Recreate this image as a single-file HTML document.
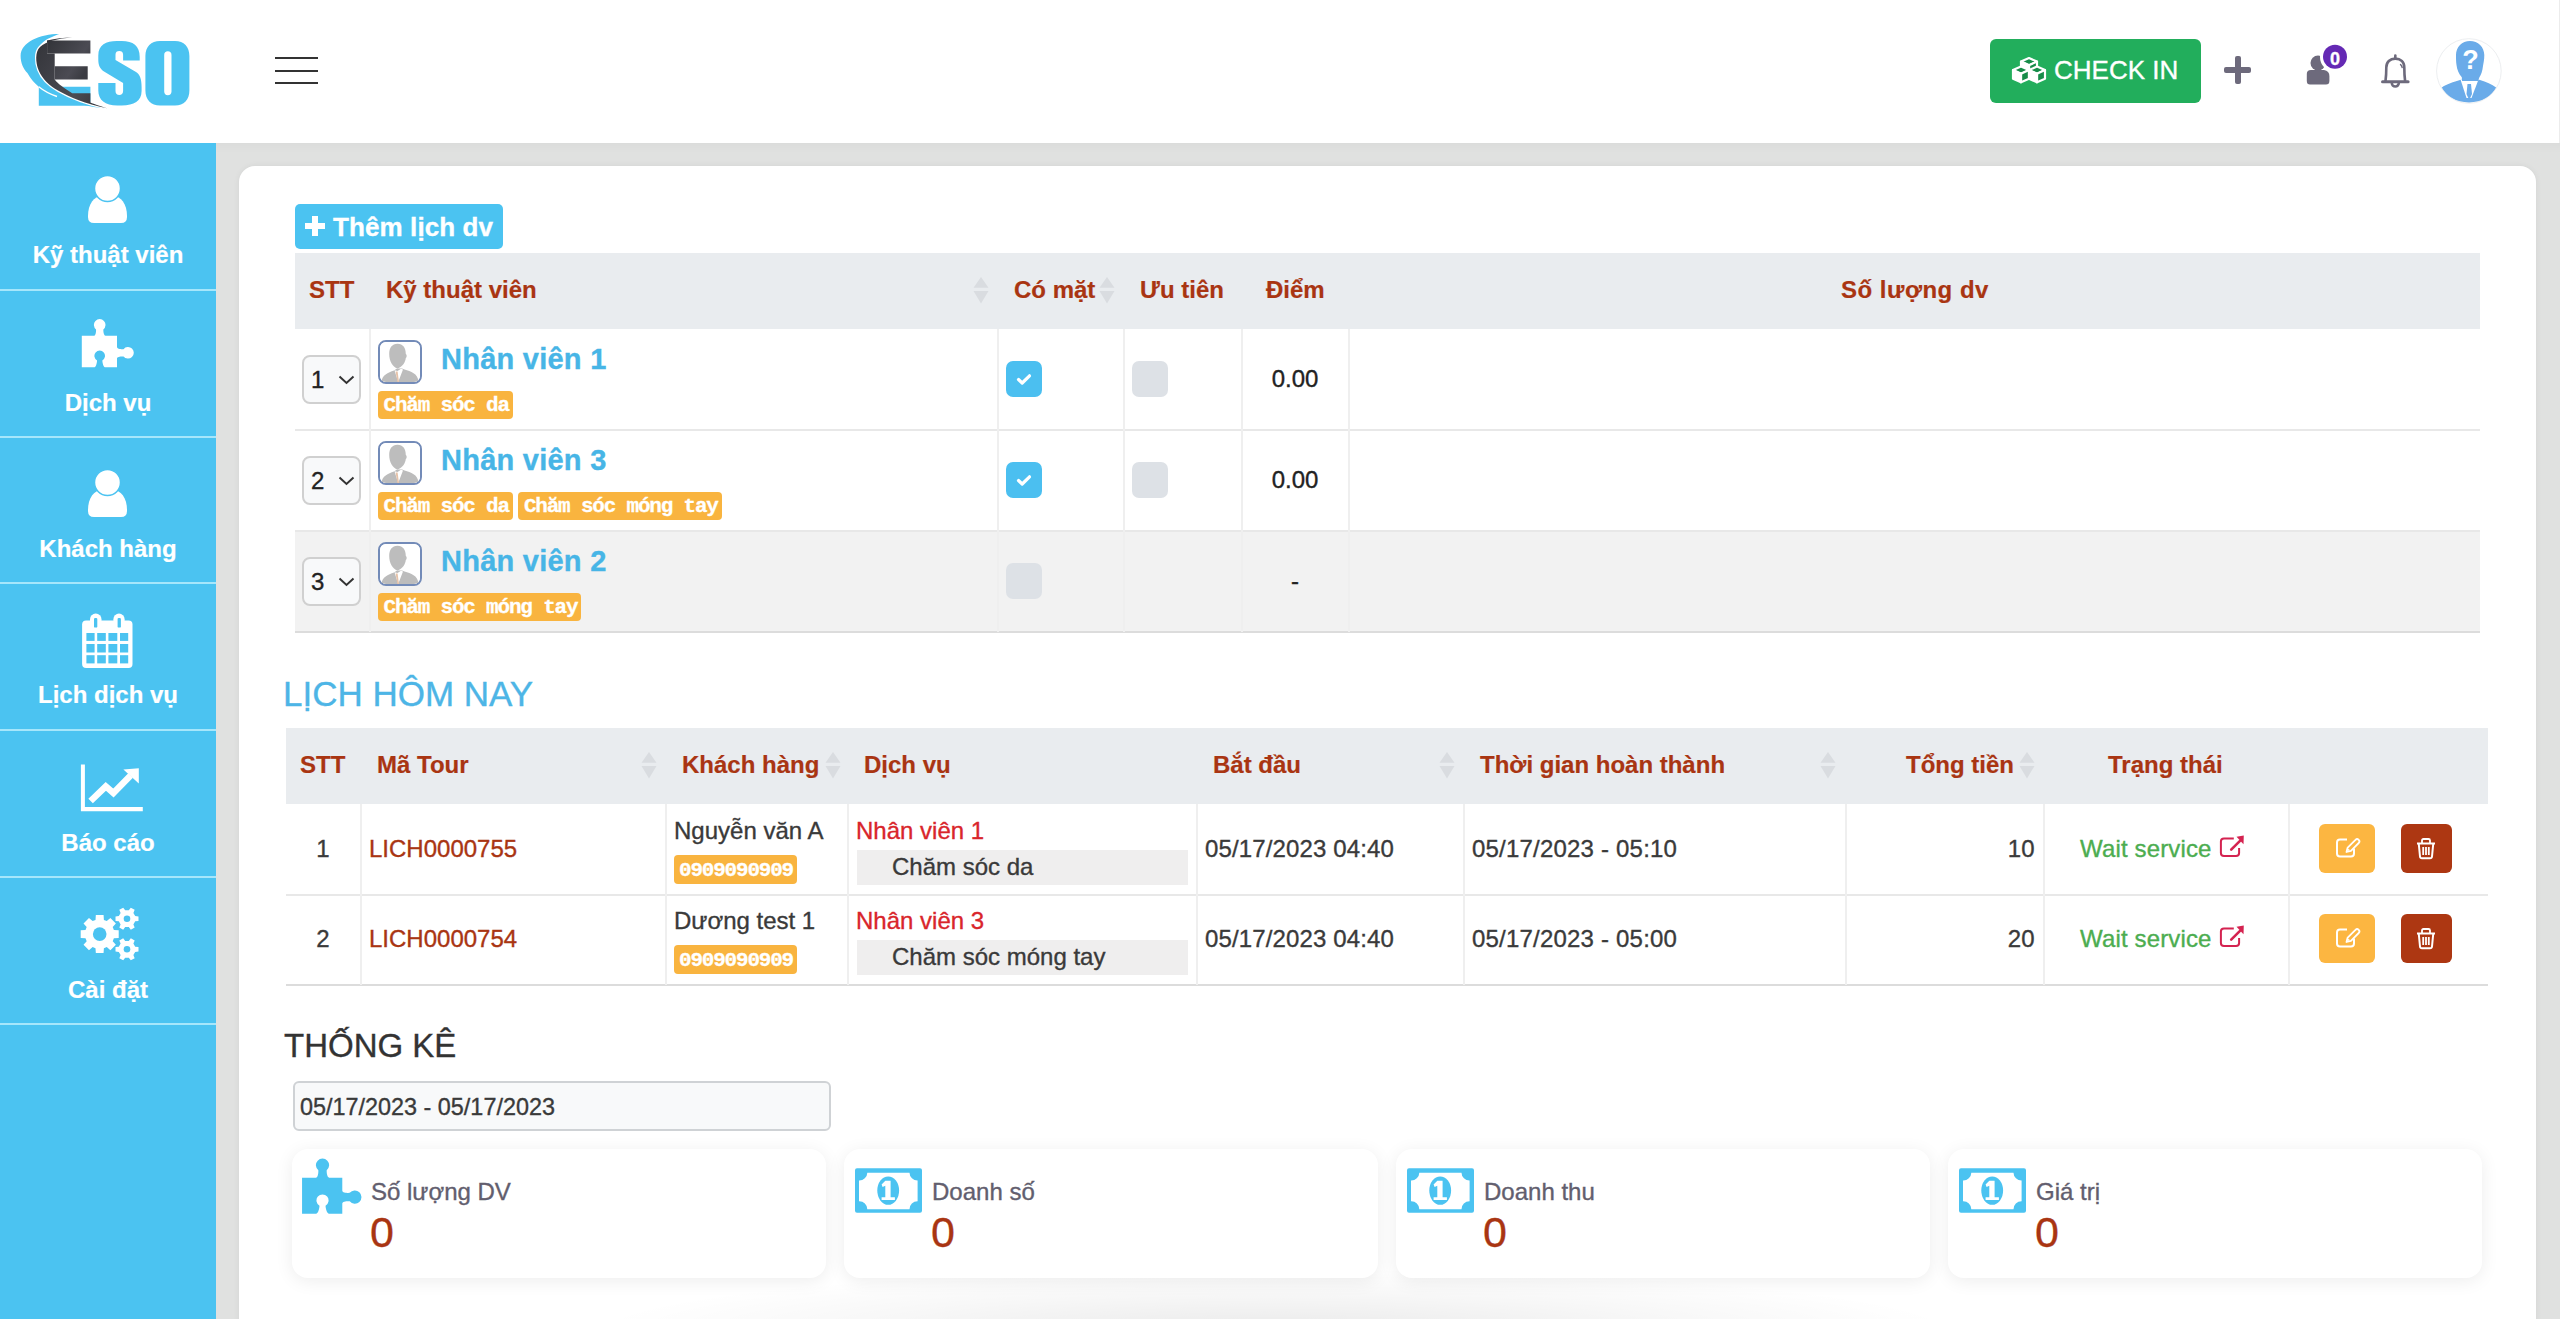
<!DOCTYPE html>
<html><head><meta charset="utf-8"><style>
*{box-sizing:border-box;margin:0;padding:0}
html,body{width:2560px;height:1319px;overflow:hidden}
body{position:relative;background:#e0e1e0;font-family:"Liberation Sans",sans-serif;color:#333}
.a{position:absolute}
.t{position:absolute;white-space:nowrap;line-height:1;-webkit-text-stroke-width:0.35px}
.b{font-weight:700}
.sl{position:absolute;left:0;width:216px;height:2px;background:#a6e6fb}
.st{position:absolute;left:0;width:216px;text-align:center;color:#fff;font-weight:700;font-size:24px;line-height:1;white-space:nowrap;-webkit-text-stroke-width:0.2px}
.th{position:absolute;white-space:nowrap;line-height:1;-webkit-text-stroke-width:0.2px;color:#a93512;font-weight:700;font-size:24px}
.hbg{background:#e9ecef}
.vl{position:absolute;width:2px;background:#efefef}
.hl{position:absolute;height:2px;background:#e8e8e8}
.tag{position:absolute;height:28px;background:#f9b43f;border-radius:4px;color:#fff;font-family:"Liberation Mono",monospace;font-weight:700;font-size:21px;letter-spacing:-1.2px;-webkit-text-stroke-width:0.3px;line-height:30px;padding:0 4px 0 5.5px;white-space:nowrap}
.sel{position:absolute;width:59px;height:49px;border:2px solid #d0d0d0;border-radius:8px;background:#f8f9fa}
.ava{position:absolute;width:44px;height:44px;border:2px solid #738bb8;border-radius:8px;background:#fff;overflow:hidden}
.chk{position:absolute;width:36px;height:36px;border-radius:7px;background:#dde1e6}
.chk.on{background:#4bbff0}
.stat{position:absolute;top:1149px;height:129px;background:#fff;border-radius:16px;box-shadow:0 3px 18px rgba(0,0,0,0.075)}
</style></head><body>
<div class="a" style="left:0;top:0;width:2560px;height:143px;background:#fff"></div>
<div class="a" style="left:2559px;top:0;width:1px;height:143px;background:#ececec"></div>
<svg class="a" style="left:0;top:0" width="200" height="120" viewBox="0 0 200 120">
<defs><linearGradient id="eg" x1="0" y1="0" x2="1" y2="0.6"><stop offset="0" stop-color="#333439"/><stop offset="0.75" stop-color="#4b4b53"/><stop offset="1" stop-color="#3b3c42"/></linearGradient></defs>
<path d="M38.8,86.7 H90.4 V105.7 H38.8 Z" fill="#4bc3f1"/>
<path d="M59.3,34 C40,34 20.6,42 20.6,56 C20.6,63 23.5,69 27.4,73 C31,79 34,83 38.8,86.7 C44,91 50,94 57,96.5 C72,102.5 90,107 106.3,108.6 C90,104.5 76,100 66,95 C54,89 45,81 40.5,73 C36.5,66 35.5,58 37,52 C39,44 46,39 52,37 C55,35.5 57,34.5 59.3,34 Z" fill="#4bc3f1"/>
<path d="M38.8,86.7 C44,91 50,94 57,96.5" stroke="#fff" stroke-width="1.4" fill="none"/>
<path d="M72.2,37.4 C58,38.5 46,41 40,47 C35,52 35.5,62 38.5,70 C42,79 50,86 58,90.5 C70,97.5 85,103.5 107,108.3" stroke="#fff" stroke-width="2.6" fill="none"/>
<path d="M72.2,37.4 C58,38.5 46,41 40,47 C35,52 35.5,62 38.5,70 C42,79 50,86 58,90.5 C70,97.5 85,103.5 107,108.3 C98,105.5 93,103.5 90.4,102.5 V93.2 H72.2 C64,88 58,84 54.7,79.5 V53.4 H47.1 V40.5 C55,38.5 64,37.4 72.2,37.4 Z" fill="url(#eg)"/>
<path d="M47.1,40.5 H90.4 V53.4 H47.1 Z M54.7,66.2 H87.7 V79.5 H54.7 Z" fill="url(#eg)"/>
<path d="M98.3,55.5 C98.3,45 106,41.1 116.8,41.1 H121.8 C133,41.1 139.7,46 139.7,56.8 V60.6 H123.1 V54.8 C123.1,52 121.5,51 119.3,51 C117,51 115.5,52 115.5,54.8 V59.9 L136,72 C140,74.5 141.6,79 141.6,87.3 V91.1 C141.6,101 134,105.5 121.8,105.5 H117.4 C105,105.5 98.3,100 98.3,90.5 V82.9 H115.5 V91.1 C115.5,94 117,95 119.3,95 C121.5,95 123.1,94 123.1,91.1 V82.9 L104,71.5 C100,69 98.3,65 98.3,60 Z" fill="#4bc3f1"/>
<path d="M160,41.1 H175 C184,41.1 189.4,47 189.4,56 V90.5 C189.4,99.5 184,105.5 175,105.5 H160 C151,105.5 145.4,99.5 145.4,90.5 V56 C145.4,47 151,41.1 160,41.1 Z M164.2,55 V91.6 C164.2,94 165.6,95.3 167.85,95.3 C170.1,95.3 171.5,94 171.5,91.6 V55 C171.5,52.6 170.1,51.3 167.85,51.3 C165.6,51.3 164.2,52.6 164.2,55 Z" fill="#4bc3f1" fill-rule="evenodd"/>
</svg>
<div class="a" style="left:275px;top:57px;width:43px;height:2px;background:#333"></div>
<div class="a" style="left:275px;top:70px;width:43px;height:2px;background:#333"></div>
<div class="a" style="left:275px;top:82px;width:43px;height:2px;background:#333"></div>
<div class="a" style="left:1990px;top:39px;width:211px;height:64px;background:#22ae5c;border-radius:6px"></div>
<svg class="a" style="left:2000px;top:45px" width="60" height="50" viewBox="2000 45 60 50" stroke="#fff" stroke-width="2.2" stroke-linejoin="round"><path d="M2029,58 L2037,61.6 L2029,65.2 L2021,61.6 Z" fill="#178c49"/><path d="M2029,65.2 L2037,61.6 L2037,70.2 L2029,73.8 Z" fill="#178c49"/><path d="M2021,61.6 L2029,65.2 L2029,73.8 L2021,70.2 Z" fill="#fff"/><path d="M2021,66.5 L2029,70.1 L2021,73.7 L2013,70.1 Z" fill="#178c49"/><path d="M2021,73.7 L2029,70.1 L2029,78.69999999999999 L2021,82.3 Z" fill="#178c49"/><path d="M2013,70.1 L2021,73.7 L2021,82.3 L2013,78.69999999999999 Z" fill="#fff"/><path d="M2037,66.5 L2045,70.1 L2037,73.7 L2029,70.1 Z" fill="#178c49"/><path d="M2037,73.7 L2045,70.1 L2045,78.69999999999999 L2037,82.3 Z" fill="#178c49"/><path d="M2029,70.1 L2037,73.7 L2037,82.3 L2029,78.69999999999999 Z" fill="#fff"/></svg>
<div class="t" style="left:2054px;top:57px;font-size:26px;color:#fff">CHECK IN</div>
<div class="a" style="left:2224px;top:67px;width:27px;height:6px;background:#6d6a7c;border-radius:2px"></div>
<div class="a" style="left:2234.5px;top:56px;width:6px;height:28px;background:#6d6a7c;border-radius:2px"></div>
<svg class="a" style="left:2300px;top:40px" width="52" height="50" viewBox="2300 40 52 50"><defs><mask id="um"><rect x="2300" y="40" width="52" height="50" fill="#fff"/><circle cx="2335" cy="57" r="15" fill="#000"/></mask></defs><g mask="url(#um)" fill="#6d6a7c"><circle cx="2318" cy="63" r="7.5"/><path d="M2306.8,74 Q2306.8,70 2311,70 H2324 Q2329.4,71 2329.4,76 V81 Q2329.4,84.5 2326,84.5 H2310 Q2306.8,84.5 2306.8,81 Z"/></g><circle cx="2318" cy="63" r="0" /><circle cx="2335" cy="56.8" r="12" fill="#6429b4"/></svg>
<div class="t b" style="left:2323px;top:50px;width:24px;text-align:center;font-size:18px;color:#fff">0</div>
<svg class="a" style="left:2379px;top:53px" width="34" height="36" viewBox="0 0 34 36" fill="none" stroke="#6d6a7c" stroke-width="2.6" stroke-linecap="round"><path d="M16.3,2.5 V5.6"/><path d="M6.5,28 C7,24 7.3,20 7.3,14.5 C7.3,9 11,5.6 16.3,5.6 C21.6,5.6 25.3,9 25.3,14.5 C25.3,20 25.6,24 26.1,28"/><path d="M3.5,28.7 H29.1" stroke-width="3"/><path d="M12.8,30 A3.5,3.5 0 0 0 19.8,30"/><path d="M21.5,11.5 Q22.8,12.8 23.2,14.5" stroke-width="1.4"/></svg>
<svg class="a" style="left:2436px;top:38px" width="66" height="66" viewBox="0 0 66 66">
<defs><clipPath id="avc"><circle cx="32.9" cy="33" r="32.3"/></clipPath></defs>
<circle cx="32.9" cy="33" r="32.3" fill="#fff" stroke="#eceef0" stroke-width="1"/>
<g clip-path="url(#avc)">
<path d="M5.8,49.6 C10,46 18,44 24,42 L26,41.5 H42 L44,42 C50,44 56,46 60.1,49.6 C56,58 46,64.5 33,64.5 C20,64.5 10,58 5.8,49.6 Z" fill="#6aabe9"/>
<path d="M24.5,41.5 H42.5 L35.5,60 H30.5 Z" fill="#fff"/>
<path d="M31.5,46 H35 L36,56 L33.2,62 L30.5,56 Z" fill="#6aabe9"/>
<path d="M34,2.9 C42,2.9 48.3,9 48.3,17 C48.3,22 47.5,25 47,28 C46.5,33 45,37 43.4,39.3 L42,43 H26 L25.8,39.3 C23,36 21,32 20.5,27 C20,24 20,20 20,17 C20,9 26,2.9 34,2.9 Z" fill="#6aabe9"/>
</g>
<text x="34.4" y="30.5" text-anchor="middle" font-family="Liberation Sans" font-weight="700" font-size="27" fill="#fff">?</text>
</svg>
<div class="a" style="left:216px;top:143px;width:2344px;height:10px;background:linear-gradient(rgba(0,0,0,0.025),rgba(0,0,0,0))"></div>
<div class="a" style="left:0;top:143px;width:216px;height:1176px;background:#4bc3f1"></div>
<div class="sl" style="top:289px"></div>
<div class="sl" style="top:436px"></div>
<div class="sl" style="top:582px"></div>
<div class="sl" style="top:729px"></div>
<div class="sl" style="top:876px"></div>
<div class="sl" style="top:1023px"></div>
<div class="st" style="top:243px">Kỹ thuật viên</div>
<div class="st" style="top:391px">Dịch vụ</div>
<div class="st" style="top:537px">Khách hàng</div>
<div class="st" style="top:683px">Lịch dịch vụ</div>
<div class="st" style="top:831px">Báo cáo</div>
<div class="st" style="top:978px">Cài đặt</div>
<svg class="a" style="left:88px;top:176px" width="39" height="47" viewBox="0 0 39 47"><path d="M0,40 C0,28 6,20 14,20 H25 C33,20 39,28 39,40 V41 Q39,47 33,47 H6 Q0,47 0,41 Z" fill="#fff"/><circle cx="19.5" cy="12.5" r="13" fill="#fff" stroke="#4bc3f1" stroke-width="1.5"/></svg>
<svg class="a" style="left:88px;top:470px" width="39" height="47" viewBox="0 0 39 47"><path d="M0,40 C0,28 6,20 14,20 H25 C33,20 39,28 39,40 V41 Q39,47 33,47 H6 Q0,47 0,41 Z" fill="#fff"/><circle cx="19.5" cy="12.5" r="13" fill="#fff" stroke="#4bc3f1" stroke-width="1.5"/></svg>
<svg class="a" style="left:80px;top:316px" width="56" height="56" viewBox="0 0 56 56"><path d="M1.8,19.8 L14,19.8 C15.5,19.8 16.2,16 16.04,13.4 A5.8,5.8 0 1 1 23.36,13.4 C23.2,16 24,19.8 25.5,19.8 L37,19.8 L37,31 C37,33 41,33.3 43.5,33.14 A5.8,5.8 0 1 1 43.5,40.46 C41,40.3 37,40.6 37,42.6 L37,51.3 L25.5,51.3 C23.5,51.3 22.5,47 22.33,44.4 A5.3,5.3 0 1 0 17.07,44.4 C16.9,47 16,51.3 14,51.3 L1.8,51.3 Z" fill="#fff"/></svg>
<svg class="a" style="left:80px;top:612px" width="56" height="58" viewBox="0 0 56 58"><rect x="2.1" y="8.6" width="50.4" height="47.3" rx="4" fill="#fff"/><rect x="10" y="1.6" width="11.5" height="16" rx="5.7" fill="#fff"/><rect x="33.4" y="1.6" width="11.2" height="16" rx="5.6" fill="#fff"/><g fill="#4bc3f1"><rect x="14" y="5.9" width="3.3" height="9.7" rx="1.2"/><rect x="37.6" y="5.9" width="3.3" height="9.7" rx="1.2"/><rect x="6.4" y="21" width="8.2" height="7.9"/><rect x="6.4" y="32" width="8.2" height="8.5"/><rect x="6.4" y="43.2" width="8.2" height="8.2"/><rect x="17.2" y="21" width="8.6" height="7.9"/><rect x="17.2" y="32" width="8.6" height="8.5"/><rect x="17.2" y="43.2" width="8.6" height="8.2"/><rect x="28.4" y="21" width="8.9" height="7.9"/><rect x="28.4" y="32" width="8.9" height="8.5"/><rect x="28.4" y="43.2" width="8.9" height="8.2"/><rect x="40" y="21" width="8.2" height="7.9"/><rect x="40" y="32" width="8.2" height="8.5"/><rect x="40" y="43.2" width="8.2" height="8.2"/></g></svg>
<svg class="a" style="left:80px;top:763px" width="64" height="50" viewBox="0 0 64 50"><path d="M0.9,1.6 H4.9 V44 H62.8 V48.2 H0.9 Z" fill="#fff"/><path d="M10.6,38 L25.8,23.4 L33.4,30 L50.6,12.5" stroke="#fff" stroke-width="6.5" fill="none" stroke-linejoin="miter"/><path d="M43.4,6.4 L58.8,5.2 L58.8,20.4 Z" fill="#fff"/></svg>
<svg class="a" style="left:80px;top:900px" width="62" height="64" viewBox="0 0 62 64"><path d="M33.89,29.90 L38.71,30.23 L38.71,37.97 L33.89,38.30 L32.71,41.16 L35.88,44.81 L30.41,50.28 L26.76,47.11 L23.90,48.29 L23.57,53.11 L15.83,53.11 L15.50,48.29 L12.64,47.11 L8.99,50.28 L3.52,44.81 L6.69,41.16 L5.51,38.30 L0.69,37.97 L0.69,30.23 L5.51,29.90 L6.69,27.04 L3.52,23.39 L8.99,17.92 L12.64,21.09 L15.50,19.91 L15.83,15.09 L23.57,15.09 L23.90,19.91 L26.76,21.09 L30.41,17.92 L35.88,23.39 L32.71,27.04 Z M55.18,16.04 L58.49,16.47 L58.49,20.93 L55.18,21.36 L53.39,24.45 L54.68,27.53 L50.81,29.76 L48.79,27.11 L45.21,27.11 L43.19,29.76 L39.32,27.53 L40.61,24.45 L38.82,21.36 L35.51,20.93 L35.51,16.47 L38.82,16.04 L40.61,12.95 L39.32,9.87 L43.19,7.64 L45.21,10.29 L48.79,10.29 L50.81,7.64 L54.68,9.87 L53.39,12.95 Z M55.18,46.64 L58.49,47.07 L58.49,51.53 L55.18,51.96 L53.39,55.05 L54.68,58.13 L50.81,60.36 L48.79,57.71 L45.21,57.71 L43.19,60.36 L39.32,58.13 L40.61,55.05 L38.82,51.96 L35.51,51.53 L35.51,47.07 L38.82,46.64 L40.61,43.55 L39.32,40.47 L43.19,38.24 L45.21,40.89 L48.79,40.89 L50.81,38.24 L54.68,40.47 L53.39,43.55 Z" fill="#fff"/><circle cx="19.7" cy="34.1" r="6.8" fill="#4bc3f1"/><circle cx="47" cy="18.7" r="3.3" fill="#4bc3f1"/><circle cx="47" cy="49.3" r="3.3" fill="#4bc3f1"/></svg>
<div class="a" style="left:239px;top:166px;width:2297px;height:1300px;background:#fff;border-radius:16px;box-shadow:0 0 6px rgba(0,0,0,0.06)"></div>
<div class="a" style="left:590px;top:1268px;width:1370px;height:64px;background:radial-gradient(ellipse 50% 100% at 50% 100%, rgba(0,0,0,0.085), rgba(0,0,0,0.03) 60%, rgba(0,0,0,0) 100%)"></div>
<div class="a" style="left:295px;top:204px;width:208px;height:45px;background:#4bc3f1;border-radius:5px"></div>
<div class="a" style="left:305px;top:223px;width:20px;height:6px;background:#fff"></div>
<div class="a" style="left:312px;top:216px;width:6px;height:20px;background:#fff"></div>
<div class="t b" style="left:333px;top:214px;font-size:26px;letter-spacing:0.1px;color:#fff">Thêm lịch dv</div>
<div class="a hbg" style="left:295px;top:253px;width:2185px;height:76px"></div>
<div class="th" style="left:309px;top:278px">STT</div>
<div class="th" style="left:386px;top:278px">Kỹ thuật viên</div>
<div class="th" style="left:1014px;top:278px">Có mặt</div>
<div class="th" style="left:1140px;top:278px">Ưu tiên</div>
<div class="th" style="left:1266px;top:278px">Điểm</div>
<div class="th" style="left:1841px;top:278px;letter-spacing:0.5px">Số lượng dv</div>
<svg class="a" style="left:973px;top:276px" width="16" height="28" viewBox="0 0 16 28"><path d="M8,1 L15.5,11.8 H0.5 Z" fill="#d9dce0"/><path d="M8,27.5 L15.5,15 H0.5 Z" fill="#d9dce0"/></svg>
<svg class="a" style="left:1099px;top:276px" width="16" height="28" viewBox="0 0 16 28"><path d="M8,1 L15.5,11.8 H0.5 Z" fill="#d9dce0"/><path d="M8,27.5 L15.5,15 H0.5 Z" fill="#d9dce0"/></svg>
<div class="a" style="left:295px;top:531px;width:2185px;height:101px;background:#f2f2f2"></div>
<div class="hl" style="left:295px;top:429px;width:2185px"></div>
<div class="hl" style="left:295px;top:530px;width:2185px"></div>
<div class="hl" style="left:295px;top:631px;width:2185px;background:#dcdcdc"></div>
<div class="vl" style="left:369px;top:329px;height:303px"></div>
<div class="vl" style="left:997px;top:329px;height:303px"></div>
<div class="vl" style="left:1123px;top:329px;height:303px"></div>
<div class="vl" style="left:1241px;top:329px;height:303px"></div>
<div class="vl" style="left:1348px;top:329px;height:303px"></div>
<div class="sel" style="left:302px;top:355px"></div>
<div class="t" style="left:311px;top:368px;font-size:24px;color:#222">1</div>
<svg class="a" style="left:338px;top:375px" width="17" height="10" viewBox="0 0 17 10"><path d="M1.5,1.5 L8.5,8 L15.5,1.5" stroke="#333" stroke-width="2" fill="none"/></svg>
<div class="ava" style="left:378px;top:340px"><svg width="40" height="40" viewBox="0 0 40 40" style="display:block"><rect width="40" height="40" fill="#fff"/><path d="M1.5,40 C2,33 8,30.5 14,28.5 L17,26.5 H22 L24.5,27.5 C31,29.5 37.5,31 38.8,40 Z" fill="#bcbcbc"/><path d="M17.5,1.8 C12,1.8 9.2,6 9.2,12 C9.2,19 12.5,25 17.5,26.4 C22.5,25 25.5,20 25.8,16 C27,15.5 27,12.5 25.8,12 C25.8,6 23,1.8 17.5,1.8 Z" fill="#bdbdbd"/><path d="M14.5,28.2 L18.2,40 L23,27.4 L21,26.8 L17.5,29 Z" fill="#fff"/><path d="M15.6,29.5 L17.4,40 H19 L17.6,29.5 Z" fill="#e6c3aa"/></svg></div>
<div class="t b" style="left:441px;top:345px;font-size:29px;letter-spacing:0.25px;color:#47b5e6">Nhân viên 1</div>
<div class="tag" style="left:378px;top:391px">Chăm sóc da</div>
<div class="chk on" style="left:1006px;top:361px"><svg class="a" width="36" height="36" viewBox="0 0 36 36" style="left:0;top:0"><path d="M12.5,18.5 L16.2,22 L23.5,14.8" stroke="#fff" stroke-width="3.2" fill="none" stroke-linecap="round" stroke-linejoin="round"/></svg></div>
<div class="chk" style="left:1132px;top:361px"></div>
<div class="t" style="left:1241px;width:108px;text-align:center;top:367px;font-size:24px;color:#222">0.00</div>
<div class="sel" style="left:302px;top:456px"></div>
<div class="t" style="left:311px;top:469px;font-size:24px;color:#222">2</div>
<svg class="a" style="left:338px;top:476px" width="17" height="10" viewBox="0 0 17 10"><path d="M1.5,1.5 L8.5,8 L15.5,1.5" stroke="#333" stroke-width="2" fill="none"/></svg>
<div class="ava" style="left:378px;top:441px"><svg width="40" height="40" viewBox="0 0 40 40" style="display:block"><rect width="40" height="40" fill="#fff"/><path d="M1.5,40 C2,33 8,30.5 14,28.5 L17,26.5 H22 L24.5,27.5 C31,29.5 37.5,31 38.8,40 Z" fill="#bcbcbc"/><path d="M17.5,1.8 C12,1.8 9.2,6 9.2,12 C9.2,19 12.5,25 17.5,26.4 C22.5,25 25.5,20 25.8,16 C27,15.5 27,12.5 25.8,12 C25.8,6 23,1.8 17.5,1.8 Z" fill="#bdbdbd"/><path d="M14.5,28.2 L18.2,40 L23,27.4 L21,26.8 L17.5,29 Z" fill="#fff"/><path d="M15.6,29.5 L17.4,40 H19 L17.6,29.5 Z" fill="#e6c3aa"/></svg></div>
<div class="t b" style="left:441px;top:446px;font-size:29px;letter-spacing:0.25px;color:#47b5e6">Nhân viên 3</div>
<div class="tag" style="left:378px;top:492px">Chăm sóc da</div>
<div class="tag" style="left:518.4px;top:492px">Chăm sóc móng tay</div>
<div class="chk on" style="left:1006px;top:462px"><svg class="a" width="36" height="36" viewBox="0 0 36 36" style="left:0;top:0"><path d="M12.5,18.5 L16.2,22 L23.5,14.8" stroke="#fff" stroke-width="3.2" fill="none" stroke-linecap="round" stroke-linejoin="round"/></svg></div>
<div class="chk" style="left:1132px;top:462px"></div>
<div class="t" style="left:1241px;width:108px;text-align:center;top:468px;font-size:24px;color:#222">0.00</div>
<div class="sel" style="left:302px;top:557px"></div>
<div class="t" style="left:311px;top:570px;font-size:24px;color:#222">3</div>
<svg class="a" style="left:338px;top:577px" width="17" height="10" viewBox="0 0 17 10"><path d="M1.5,1.5 L8.5,8 L15.5,1.5" stroke="#333" stroke-width="2" fill="none"/></svg>
<div class="ava" style="left:378px;top:542px"><svg width="40" height="40" viewBox="0 0 40 40" style="display:block"><rect width="40" height="40" fill="#fff"/><path d="M1.5,40 C2,33 8,30.5 14,28.5 L17,26.5 H22 L24.5,27.5 C31,29.5 37.5,31 38.8,40 Z" fill="#bcbcbc"/><path d="M17.5,1.8 C12,1.8 9.2,6 9.2,12 C9.2,19 12.5,25 17.5,26.4 C22.5,25 25.5,20 25.8,16 C27,15.5 27,12.5 25.8,12 C25.8,6 23,1.8 17.5,1.8 Z" fill="#bdbdbd"/><path d="M14.5,28.2 L18.2,40 L23,27.4 L21,26.8 L17.5,29 Z" fill="#fff"/><path d="M15.6,29.5 L17.4,40 H19 L17.6,29.5 Z" fill="#e6c3aa"/></svg></div>
<div class="t b" style="left:441px;top:547px;font-size:29px;letter-spacing:0.25px;color:#47b5e6">Nhân viên 2</div>
<div class="tag" style="left:378px;top:593px">Chăm sóc móng tay</div>
<div class="chk" style="left:1006px;top:563px"></div>
<div class="t" style="left:1241px;width:108px;text-align:center;top:569px;font-size:24px;color:#222">-</div>
<div class="t" style="left:283px;top:676px;font-size:35px;color:#4db5e6">LỊCH HÔM NAY</div>
<div class="a hbg" style="left:286px;top:728px;width:2202px;height:76px"></div>
<div class="th" style="left:300px;top:753px">STT</div>
<div class="th" style="left:377px;top:753px">Mã Tour</div>
<div class="th" style="left:682px;top:753px">Khách hàng</div>
<div class="th" style="left:864px;top:753px">Dịch vụ</div>
<div class="th" style="left:1213px;top:753px">Bắt đầu</div>
<div class="th" style="left:1480px;top:753px">Thời gian hoàn thành</div>
<div class="th" style="left:1906px;top:753px">Tổng tiền</div>
<div class="th" style="left:2108px;top:753px">Trạng thái</div>
<svg class="a" style="left:641px;top:751px" width="16" height="28" viewBox="0 0 16 28"><path d="M8,1 L15.5,11.8 H0.5 Z" fill="#d9dce0"/><path d="M8,27.5 L15.5,15 H0.5 Z" fill="#d9dce0"/></svg>
<svg class="a" style="left:825px;top:751px" width="16" height="28" viewBox="0 0 16 28"><path d="M8,1 L15.5,11.8 H0.5 Z" fill="#d9dce0"/><path d="M8,27.5 L15.5,15 H0.5 Z" fill="#d9dce0"/></svg>
<svg class="a" style="left:1439px;top:751px" width="16" height="28" viewBox="0 0 16 28"><path d="M8,1 L15.5,11.8 H0.5 Z" fill="#d9dce0"/><path d="M8,27.5 L15.5,15 H0.5 Z" fill="#d9dce0"/></svg>
<svg class="a" style="left:1820px;top:751px" width="16" height="28" viewBox="0 0 16 28"><path d="M8,1 L15.5,11.8 H0.5 Z" fill="#d9dce0"/><path d="M8,27.5 L15.5,15 H0.5 Z" fill="#d9dce0"/></svg>
<svg class="a" style="left:2019px;top:751px" width="16" height="28" viewBox="0 0 16 28"><path d="M8,1 L15.5,11.8 H0.5 Z" fill="#d9dce0"/><path d="M8,27.5 L15.5,15 H0.5 Z" fill="#d9dce0"/></svg>
<div class="hl" style="left:286px;top:894px;width:2202px"></div>
<div class="hl" style="left:286px;top:984px;width:2202px;background:#dcdcdc"></div>
<div class="vl" style="left:360px;top:804px;height:181px"></div>
<div class="vl" style="left:665px;top:804px;height:181px"></div>
<div class="vl" style="left:847px;top:804px;height:181px"></div>
<div class="vl" style="left:1196px;top:804px;height:181px"></div>
<div class="vl" style="left:1463px;top:804px;height:181px"></div>
<div class="vl" style="left:1845px;top:804px;height:181px"></div>
<div class="vl" style="left:2043px;top:804px;height:181px"></div>
<div class="vl" style="left:2288px;top:804px;height:181px"></div>
<div class="t" style="left:286px;width:74px;text-align:center;top:837px;font-size:24px;color:#3a3a3a">1</div>
<div class="t" style="left:369px;top:837px;font-size:24px;color:#a93512">LICH0000755</div>
<div class="t" style="left:674px;top:819px;font-size:24px;color:#3a3a3a">Nguyễn văn A</div>
<div class="tag" style="left:674px;top:855px;height:29px;line-height:31px;padding:0 4px 0 5px">0909090909</div>
<div class="t" style="left:856px;top:819px;font-size:24px;color:#d9252b">Nhân viên 1</div>
<div class="a" style="left:857px;top:850px;width:331px;height:35px;background:#efeeee"></div>
<div class="t" style="left:892px;top:855px;font-size:24px;color:#3a3a3a">Chăm sóc da</div>
<div class="t" style="left:1205px;top:837px;font-size:24px;letter-spacing:0.13px;color:#3a3a3a">05/17/2023 04:40</div>
<div class="t" style="left:1472px;top:837px;font-size:24px;letter-spacing:0.2px;color:#3a3a3a">05/17/2023 - 05:10</div>
<div class="t" style="left:1845px;width:189.5px;text-align:right;top:837px;font-size:24px;color:#3a3a3a">10</div>
<div class="t" style="left:2080px;top:837px;font-size:24px;letter-spacing:0.15px;color:#4cad50">Wait service</div>
<svg class="a" style="left:2216.5px;top:832px" width="30" height="28" viewBox="0 0 30 28" fill="none" stroke="#d42350" stroke-width="2"><path d="M16.8,6.5 H7 Q3.9,6.5 3.9,9.6 V21 Q3.9,24 7,24 H19 Q22.1,24 22.1,21 V16"/><path d="M14.2,17.6 L23,8.8" stroke-width="2.6" stroke-linecap="round"/><path d="M19.5,4.7 L26.8,3.5 L26.5,12.3 Z" fill="#d42350" stroke="none"/></svg>
<div class="a" style="left:2319px;top:824px;width:56px;height:49px;background:#fcb641;border-radius:6px"></div><svg class="a" style="left:2335px;top:836px" width="28" height="24" viewBox="0 0 28 24" fill="none" stroke="#fff" stroke-width="2" stroke-linejoin="round"><path d="M12,3.5 H5 Q2,3.5 2,6.5 V17.5 Q2,20.5 5,20.5 H16 Q19,20.5 19,17.5 V12.5"/><path d="M11.5,16 L12.67,11.57 L20.5,3.8 Q22.1,2.2 23.7,3.8 Q25.3,5.4 23.7,7 L15.93,14.83 Z" stroke-width="1.8"/><circle cx="13.6" cy="13.9" r="0.9" fill="#fff" stroke="none"/></svg>
<div class="a" style="left:2401px;top:824px;width:51px;height:49px;background:#ad3712;border-radius:6px"></div><svg class="a" style="left:2415.3px;top:837px" width="22" height="24" viewBox="0 0 22 24" fill="none" stroke="#fff" stroke-width="2"><path d="M2,6.5 H20"/><path d="M7,6 V3.5 Q7,2 8.5,2 H13.5 Q15,2 15,3.5 V6" stroke-width="1.8"/><path d="M3.8,7 L5,19.5 Q5.2,21.3 7,21.3 H15 Q16.8,21.3 17,19.5 L18.2,7"/><path d="M8.2,10 V18 M11,10 V18 M13.8,10 V18" stroke-width="1.8"/></svg>
<div class="t" style="left:286px;width:74px;text-align:center;top:927px;font-size:24px;color:#3a3a3a">2</div>
<div class="t" style="left:369px;top:927px;font-size:24px;color:#a93512">LICH0000754</div>
<div class="t" style="left:674px;top:909px;font-size:24px;color:#3a3a3a">Dương test 1</div>
<div class="tag" style="left:674px;top:945px;height:29px;line-height:31px;padding:0 4px 0 5px">0909090909</div>
<div class="t" style="left:856px;top:909px;font-size:24px;color:#d9252b">Nhân viên 3</div>
<div class="a" style="left:857px;top:940px;width:331px;height:35px;background:#efeeee"></div>
<div class="t" style="left:892px;top:945px;font-size:24px;color:#3a3a3a">Chăm sóc móng tay</div>
<div class="t" style="left:1205px;top:927px;font-size:24px;letter-spacing:0.13px;color:#3a3a3a">05/17/2023 04:40</div>
<div class="t" style="left:1472px;top:927px;font-size:24px;letter-spacing:0.2px;color:#3a3a3a">05/17/2023 - 05:00</div>
<div class="t" style="left:1845px;width:189.5px;text-align:right;top:927px;font-size:24px;color:#3a3a3a">20</div>
<div class="t" style="left:2080px;top:927px;font-size:24px;letter-spacing:0.15px;color:#4cad50">Wait service</div>
<svg class="a" style="left:2216.5px;top:922px" width="30" height="28" viewBox="0 0 30 28" fill="none" stroke="#d42350" stroke-width="2"><path d="M16.8,6.5 H7 Q3.9,6.5 3.9,9.6 V21 Q3.9,24 7,24 H19 Q22.1,24 22.1,21 V16"/><path d="M14.2,17.6 L23,8.8" stroke-width="2.6" stroke-linecap="round"/><path d="M19.5,4.7 L26.8,3.5 L26.5,12.3 Z" fill="#d42350" stroke="none"/></svg>
<div class="a" style="left:2319px;top:914px;width:56px;height:49px;background:#fcb641;border-radius:6px"></div><svg class="a" style="left:2335px;top:926px" width="28" height="24" viewBox="0 0 28 24" fill="none" stroke="#fff" stroke-width="2" stroke-linejoin="round"><path d="M12,3.5 H5 Q2,3.5 2,6.5 V17.5 Q2,20.5 5,20.5 H16 Q19,20.5 19,17.5 V12.5"/><path d="M11.5,16 L12.67,11.57 L20.5,3.8 Q22.1,2.2 23.7,3.8 Q25.3,5.4 23.7,7 L15.93,14.83 Z" stroke-width="1.8"/><circle cx="13.6" cy="13.9" r="0.9" fill="#fff" stroke="none"/></svg>
<div class="a" style="left:2401px;top:914px;width:51px;height:49px;background:#ad3712;border-radius:6px"></div><svg class="a" style="left:2415.3px;top:927px" width="22" height="24" viewBox="0 0 22 24" fill="none" stroke="#fff" stroke-width="2"><path d="M2,6.5 H20"/><path d="M7,6 V3.5 Q7,2 8.5,2 H13.5 Q15,2 15,3.5 V6" stroke-width="1.8"/><path d="M3.8,7 L5,19.5 Q5.2,21.3 7,21.3 H15 Q16.8,21.3 17,19.5 L18.2,7"/><path d="M8.2,10 V18 M11,10 V18 M13.8,10 V18" stroke-width="1.8"/></svg>
<div class="t" style="left:284px;top:1029px;font-size:33px;color:#333">THỐNG KÊ</div>
<div class="a" style="left:293px;top:1081px;width:538px;height:50px;border:2px solid #cfd2d5;border-radius:6px;background:#f8f9fa"></div>
<div class="t" style="left:300px;top:1096px;font-size:23.4px;color:#3a3a3a">05/17/2023 - 05/17/2023</div>
<div class="stat" style="left:292px;width:534px"></div>
<svg class="a" style="left:299.9px;top:1154.5px" width="64" height="64" viewBox="0 0 56 56"><g><path d="M1.8,19.8 L14,19.8 C15.5,19.8 16.2,16 16.04,13.4 A5.8,5.8 0 1 1 23.36,13.4 C23.2,16 24,19.8 25.5,19.8 L37,19.8 L37,31 C37,33 41,33.3 43.5,33.14 A5.8,5.8 0 1 1 43.5,40.46 C41,40.3 37,40.6 37,42.6 L37,51.3 L25.5,51.3 C23.5,51.3 22.5,47 22.33,44.4 A5.3,5.3 0 1 0 17.07,44.4 C16.9,47 16,51.3 14,51.3 L1.8,51.3 Z" fill="#4bc3f1"/></g></svg>
<div class="t" style="left:371px;top:1180px;font-size:24px;color:#625e6e">Số lượng DV</div>
<div class="t" style="left:370px;top:1211px;font-size:43px;color:#a93512">0</div>
<div class="stat" style="left:844px;width:534px"></div>
<svg class="a" style="left:855px;top:1168px" width="67" height="45" viewBox="0 0 67 44.6"><rect width="67" height="44.6" rx="2" fill="#4bc3f1"/><path d="M4,12.3 A8,8 0 0 0 12.3,4.5 H54.5 A8,8 0 0 0 62.6,12.3 V33 A8,8 0 0 0 54.5,41.1 H12.3 A8,8 0 0 0 4,33 Z" fill="#fff"/><ellipse cx="33.2" cy="22.4" rx="10.9" ry="14.2" fill="#4bc3f1"/><path d="M30.3,12.5 H35.6 V29 H39.9 V31.8 H26.6 V29 H30.3 V17.5 L27.6,18.8 L26.6,16.3 Z" fill="#fff"/></svg>
<div class="t" style="left:932px;top:1180px;font-size:24px;color:#625e6e">Doanh số</div>
<div class="t" style="left:931px;top:1211px;font-size:43px;color:#a93512">0</div>
<div class="stat" style="left:1396px;width:534px"></div>
<svg class="a" style="left:1407px;top:1168px" width="67" height="45" viewBox="0 0 67 44.6"><rect width="67" height="44.6" rx="2" fill="#4bc3f1"/><path d="M4,12.3 A8,8 0 0 0 12.3,4.5 H54.5 A8,8 0 0 0 62.6,12.3 V33 A8,8 0 0 0 54.5,41.1 H12.3 A8,8 0 0 0 4,33 Z" fill="#fff"/><ellipse cx="33.2" cy="22.4" rx="10.9" ry="14.2" fill="#4bc3f1"/><path d="M30.3,12.5 H35.6 V29 H39.9 V31.8 H26.6 V29 H30.3 V17.5 L27.6,18.8 L26.6,16.3 Z" fill="#fff"/></svg>
<div class="t" style="left:1484px;top:1180px;font-size:24px;color:#625e6e">Doanh thu</div>
<div class="t" style="left:1483px;top:1211px;font-size:43px;color:#a93512">0</div>
<div class="stat" style="left:1948px;width:534px"></div>
<svg class="a" style="left:1959px;top:1168px" width="67" height="45" viewBox="0 0 67 44.6"><rect width="67" height="44.6" rx="2" fill="#4bc3f1"/><path d="M4,12.3 A8,8 0 0 0 12.3,4.5 H54.5 A8,8 0 0 0 62.6,12.3 V33 A8,8 0 0 0 54.5,41.1 H12.3 A8,8 0 0 0 4,33 Z" fill="#fff"/><ellipse cx="33.2" cy="22.4" rx="10.9" ry="14.2" fill="#4bc3f1"/><path d="M30.3,12.5 H35.6 V29 H39.9 V31.8 H26.6 V29 H30.3 V17.5 L27.6,18.8 L26.6,16.3 Z" fill="#fff"/></svg>
<div class="t" style="left:2036px;top:1180px;font-size:24px;color:#625e6e">Giá trị</div>
<div class="t" style="left:2035px;top:1211px;font-size:43px;color:#a93512">0</div>
</body></html>
